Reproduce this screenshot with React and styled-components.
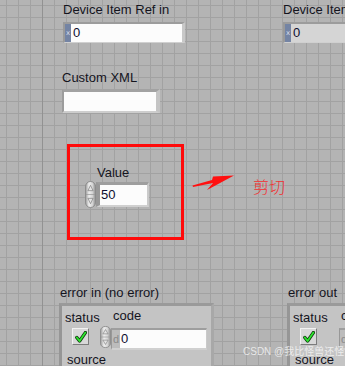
import styled, { createGlobalStyle } from "styled-components";

const GlobalStyle = createGlobalStyle`
  html, body {
    margin: 0;
    padding: 0;
    background: #b4b4b4;
  }
  body {
    font-family: "Liberation Sans", Arial, sans-serif;
  }
`;

const Canvas = styled.div`
  position: relative;
  width: 345px;
  height: 366px;
  overflow: hidden;
  background-color: #b4b4b4;
  background-image:
    linear-gradient(to right, transparent 42px, #929292 42px, #929292 43px, transparent 43px),
    linear-gradient(to right, #a2a2a2 1px, transparent 1px),
    linear-gradient(to bottom, #a2a2a2 1px, transparent 1px);
  background-size: 100% 100%, 12px 12px, 12px 12px;
  background-position: 0 0, 6px 5px, 6px 5px;
  background-repeat: no-repeat, repeat, repeat;
`;

// front panel objects sit at their own spot on the panel
const Place = styled.div`
  position: absolute;
  left: ${(p) => p.$x}px;
  top: ${(p) => p.$y}px;
`;

const Stack = styled.div`
  display: flex;
  flex-direction: column;
  align-items: flex-start;
  gap: ${(p) => p.$gap || 0}px;
`;

const Row = styled.div`
  display: flex;
  align-items: flex-start;
`;

const Label = styled.div`
  font-size: 13px;
  line-height: 15px;
  color: #14141e;
  white-space: nowrap;
  margin-left: ${(p) => p.$dx || 0}px;
`;

const ValueText = styled.span`
  font-size: 13px;
  line-height: 16px;
  color: #0e0e30;
  padding-left: 1px;
  align-self: center;
  white-space: nowrap;
`;

const RefFrame = styled.div`
  display: flex;
  box-sizing: border-box;
  width: 122px;
  height: 21px;
  border-style: solid;
  border-width: 2px 3px 1px 2px;
  border-color: #9c9c9c #c8c8c8 #d0d0d0 #9a9a9a;
  background: ${(p) => (p.$indicator ? "#d5d5d5" : "#fcfcfc")};
`;

const RefTag = styled.div`
  width: 6px;
  margin-right: 1px;
  background: #7484a4;
  color: #d6dcea;
  font-family: "DejaVu Sans", sans-serif;
  font-size: 7px;
  line-height: 18px;
  text-align: center;
  overflow: hidden;
`;

const StringFrame = styled.div`
  box-sizing: border-box;
  width: 98px;
  height: 24px;
  border-style: solid;
  border-width: 3px 4px 2px 2px;
  border-color: #a2a2a2 #c4c4c4 #cdcdcd #9c9c9c;
  background: #fcfcfc;
`;

const NumFrame = styled.div`
  display: flex;
  box-sizing: border-box;
  width: ${(p) => p.$w}px;
  height: ${(p) => p.$h}px;
  margin-top: ${(p) => p.$dy || 0}px;
  border-style: solid;
  border-width: ${(p) => p.$bw};
  border-color: #9e9e9e #cacaca #d0d0d0 #989898;
  background: ${(p) => (p.$indicator ? "#d5d5d5" : "#fcfcfc")};
`;

const Radix = styled.div`
  width: 8px;
  background: #bcbcbc;
  color: #8a8a8a;
  font-size: 11px;
  line-height: 18px;
  text-align: center;
`;

const RedBox = styled.div`
  box-sizing: border-box;
  width: 117px;
  height: 96px;
  border: 3px solid #ff0a0a;
`;

const CutText = styled.div`
  font-family: "Noto Sans CJK SC", sans-serif;
  font-weight: 300;
  font-size: 16px;
  line-height: 16px;
  color: #f03030;
`;

const ClusterFrame = styled.div`
  box-sizing: border-box;
  width: ${(p) => p.$w}px;
  height: 80px;
  padding: 1px 0 0 0;
  border-style: solid;
  border-width: 3px;
  border-color: #9a9a9a #a8a8a8 #a8a8a8 #969696;
  background: #c4c4c4;
`;

const StatusCol = styled.div`
  display: flex;
  flex-direction: column;
  align-items: flex-start;
  width: 35px;
  padding: 3px 0 0 3px;
  gap: 3px;
`;

const CodeCol = styled.div`
  display: flex;
  flex-direction: column;
  align-items: flex-start;
  padding-top: 1px;
  gap: 3px;
`;

const SpinSpace = styled.div`
  width: 11px;
`;

const CheckButton = styled.div`
  display: flex;
  align-items: center;
  justify-content: center;
  box-sizing: border-box;
  width: 17px;
  height: 17px;
  margin-left: 7px;
  border: 1px solid;
  border-color: #f2f2f2 #7c7c7c #7c7c7c #f2f2f2;
  background: #d8d8d8;
`;

const SourceLabel = styled(Label)`
  margin: 2px 0 0 5px;
`;

const Watermark = styled.div`
  font-family: "Liberation Sans", "Noto Sans CJK SC", sans-serif;
  font-size: 10px;
  line-height: 12px;
  color: rgba(255, 255, 255, 0.72);
  white-space: nowrap;
`;

function Spinner({ w, h }) {
  return (
    <svg width={w} height={h} viewBox="0 0 12 28" preserveAspectRatio="none">
      <defs>
        <linearGradient id="spinFace" x1="0" x2="1" y1="0" y2="0">
          <stop offset="0" stopColor="#989898" />
          <stop offset="0.35" stopColor="#eeeeee" />
          <stop offset="0.7" stopColor="#d4d4d4" />
          <stop offset="1" stopColor="#8c8c8c" />
        </linearGradient>
      </defs>
      <rect x="0.5" y="0.5" width="11" height="27" rx="5.5" fill="url(#spinFace)" stroke="#8a8a8a" />
      <line x1="1" y1="14" x2="11" y2="14" stroke="#9a9a9a" strokeWidth="0.8" />
      <path d="M6 4.5 L8.8 10 L3.2 10 Z" fill="#e4e4e4" stroke="#7a7a7a" strokeWidth="0.7" />
      <path d="M6 23.5 L8.8 18 L3.2 18 Z" fill="#e4e4e4" stroke="#7a7a7a" strokeWidth="0.7" />
    </svg>
  );
}

function CheckMark() {
  return (
    <svg width="12" height="12" viewBox="0 0 12 12">
      <path d="M1.8 6.5 L4.6 10 L10.4 1.6" fill="none" stroke="#0f3f0f" strokeWidth="3.4" strokeLinejoin="round" strokeLinecap="round" />
      <path d="M1.8 6.5 L4.6 10 L10.4 1.6" fill="none" stroke="#2ee82e" strokeWidth="1.7" strokeLinejoin="round" strokeLinecap="round" />
    </svg>
  );
}

function RedArrow() {
  return (
    <svg width="48" height="22" viewBox="0 0 48 22">
      <polygon
        points="2.5,13.5 22,8 23,4.5 44,3.5 17,18 23,11 3,15"
        fill="#ff1010"
      />
    </svg>
  );
}

function Refnum({ label, indicator }) {
  return (
    <Stack $gap={5}>
      <Label>{label}</Label>
      <RefFrame $indicator={indicator}>
        <RefTag>x</RefTag>
        <ValueText>0</ValueText>
      </RefFrame>
    </Stack>
  );
}

function ErrorCluster({ label, width, indicator }) {
  return (
    <Stack $gap={3}>
      <Label $dx={1}>{label}</Label>
      <ClusterFrame $w={width}>
        <Row>
          <StatusCol>
            <Label>status</Label>
            <CheckButton>
              <CheckMark />
            </CheckButton>
          </StatusCol>
          <CodeCol>
            <Label $dx={13}>code</Label>
            <Row>
              {indicator ? <SpinSpace /> : <Spinner w={11} h={22} />}
              <NumFrame $w={96} $h={22} $dy={2} $bw="2px 1px 2px 1px" $indicator={indicator}>
                <Radix>d</Radix>
                <ValueText>0</ValueText>
              </NumFrame>
            </Row>
          </CodeCol>
        </Row>
        <SourceLabel>source</SourceLabel>
      </ClusterFrame>
    </Stack>
  );
}

export default function App() {
  return (
    <>
      <GlobalStyle />
      <Canvas>
        <Place $x={63} $y={2}>
          <Refnum label="Device Item Ref in" />
        </Place>
        <Place $x={283} $y={2}>
          <Refnum label="Device Item Ref out" indicator />
        </Place>

        <Place $x={62} $y={70}>
          <Stack $gap={4}>
            <Label>Custom XML</Label>
            <StringFrame $dx={1} />
          </Stack>
        </Place>

        <Place $x={67} $y={144}>
          <RedBox />
        </Place>
        <Place $x={85} $y={165}>
          <Stack $gap={1}>
            <Label $dx={12}>Value</Label>
            <Row>
              <Spinner w={11} h={27} />
              <NumFrame $w={53} $h={25} $dy={1} $bw="3px 2px 2px 4px">
                <ValueText>50</ValueText>
              </NumFrame>
            </Row>
          </Stack>
        </Place>

        <Place $x={190} $y={172}>
          <RedArrow />
        </Place>
        <Place $x={253} $y={178}>
          <CutText>剪切</CutText>
        </Place>

        <Place $x={59} $y={285}>
          <ErrorCluster label="error in (no error)" width={155} />
        </Place>
        <Place $x={287} $y={285}>
          <ErrorCluster label="error out" width={155} indicator />
        </Place>

        <Place $x={243} $y={346}>
          <Watermark>CSDN @我比怪兽还怪</Watermark>
        </Place>
      </Canvas>
    </>
  );
}
